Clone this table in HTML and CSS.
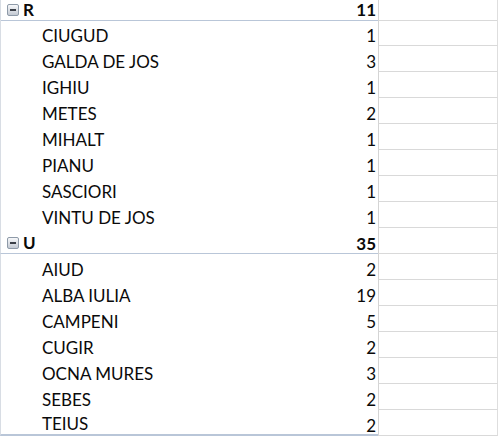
FILE: index.html
```html
<!DOCTYPE html>
<html>
<head>
<meta charset="utf-8">
<link rel="stylesheet" href="styles.css">
</head>
<body>
<div class="sheet">
  <div class="row group first"><div class="label"><span class="toggle"></span>R</div><div class="val">11</div><div class="empty"></div></div>
  <div class="row"><div class="label">CIUGUD</div><div class="val">1</div><div class="empty"></div></div>
  <div class="row"><div class="label">GALDA DE JOS</div><div class="val">3</div><div class="empty"></div></div>
  <div class="row"><div class="label">IGHIU</div><div class="val">1</div><div class="empty"></div></div>
  <div class="row"><div class="label">METES</div><div class="val">2</div><div class="empty"></div></div>
  <div class="row"><div class="label">MIHALT</div><div class="val">1</div><div class="empty"></div></div>
  <div class="row"><div class="label">PIANU</div><div class="val">1</div><div class="empty"></div></div>
  <div class="row"><div class="label">SASCIORI</div><div class="val">1</div><div class="empty"></div></div>
  <div class="row"><div class="label">VINTU DE JOS</div><div class="val">1</div><div class="empty"></div></div>
  <div class="row group"><div class="label"><span class="toggle"></span>U</div><div class="val">35</div><div class="empty"></div></div>
  <div class="row"><div class="label">AIUD</div><div class="val">2</div><div class="empty"></div></div>
  <div class="row"><div class="label">ALBA IULIA</div><div class="val">19</div><div class="empty"></div></div>
  <div class="row"><div class="label">CAMPENI</div><div class="val">5</div><div class="empty"></div></div>
  <div class="row"><div class="label">CUGIR</div><div class="val">2</div><div class="empty"></div></div>
  <div class="row"><div class="label">OCNA MURES</div><div class="val">3</div><div class="empty"></div></div>
  <div class="row"><div class="label">SEBES</div><div class="val">2</div><div class="empty"></div></div>
  <div class="row last"><div class="label">TEIUS</div><div class="val">2</div><div class="empty"></div></div>
</div>
</body>
</html>
```

FILE: styles.css
```css
html, body {
  margin: 0;
  padding: 0;
  background: #ffffff;
  overflow: hidden;
}
.sheet {
  font-family: Lato, "Open Sans", sans-serif;
  font-size: 17px;
  color: #0a0a0a;
  display: flex;
  flex-direction: column;
}
.row {
  display: grid;
  grid-template-columns: 378px 120px;
  height: 26px;
  position: relative;
}
.row.first {
  height: 20px;
}
.row > div {
  box-sizing: border-box;
  height: 100%;
}
.label {
  border-left: 1px solid #d8dde4;
  padding-left: 41px;
  display: flex;
  align-items: flex-end;
  padding-bottom: 1px;
  line-height: 19px;
  white-space: nowrap;
}
.row .val {
  position: absolute;
  right: 123px;
  bottom: 1px;
  line-height: 19px;
  height: auto;
}
.empty {
  border-left: 1px solid #d4d4d4;
  border-right: 1px solid #dedede;
  border-bottom: 1px solid #d9d9d9;
}
.group .label {
  padding-left: 6px;
  font-weight: bold;
  border-bottom: 1px solid #b9c6d8;
}
.group .val {
  font-weight: bold;
}
.last .label {
  border-bottom: 2px solid #b9c6d8;
}
.toggle {
  box-sizing: border-box;
  width: 12px;
  height: 12px;
  margin-right: 4px;
  margin-bottom: 3px;
  border: 1px solid #8e9aa8;
  border-radius: 2px;
  background: linear-gradient(#f7f8fa, #c3c9d2);
  position: relative;
  flex: none;
}
.toggle::after {
  content: "";
  position: absolute;
  left: 2px;
  right: 2px;
  top: 4px;
  height: 2px;
  background: #3a3f47;
}
```
